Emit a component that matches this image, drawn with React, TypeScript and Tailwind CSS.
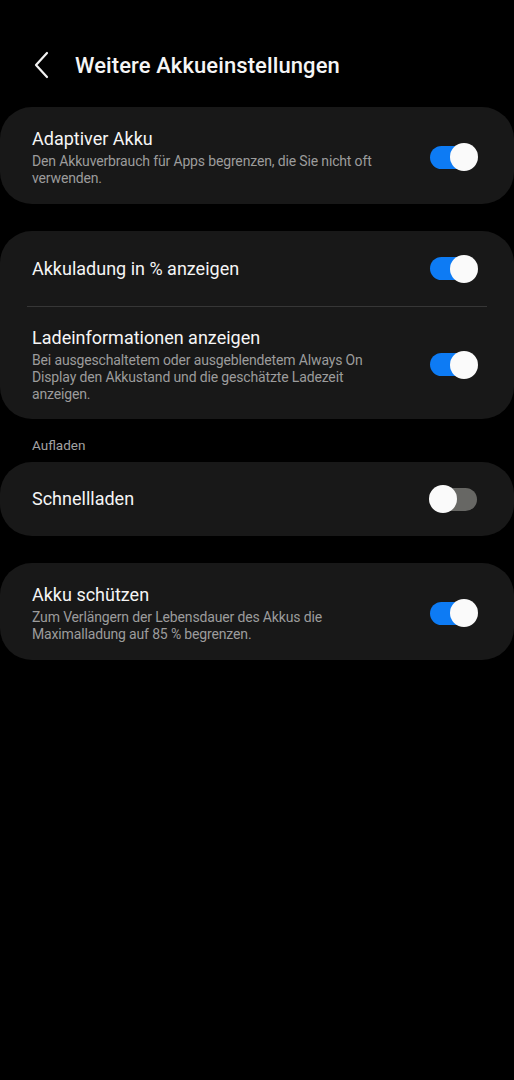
import React from 'react';

// Einstellungen-Seite: Weitere Akkueinstellungen (dunkles One UI-Layout)

function Toggle({ on }: { on: boolean }) {
  return (
    <div className="relative w-[48px] h-[28px] shrink-0 flex items-center">
      <div className={`w-[47px] h-[23px] rounded-full ${on ? 'bg-[#0d7bf4]' : 'bg-[#676764]'}`} />
      <div
        className={`absolute top-0 w-[28px] h-[28px] rounded-full bg-[#fafafa] ${on ? 'right-0' : 'left-[-1px]'}`}
      />
    </div>
  );
}

function Row({ title, sub, on }: { title: string; sub?: string; on: boolean }) {
  return (
    <div className="flex items-center justify-between pl-[32px] pr-[36px]">
      <div className="flex flex-col max-w-[360px]">
        <span className="text-[18px] leading-[24px] text-[#f5f5f5]">{title}</span>
        {sub && (
          <span className="text-[14px] leading-[17px] tracking-[-0.15px] text-[#9c9c9c] mt-[2px]">{sub}</span>
        )}
      </div>
      <Toggle on={on} />
    </div>
  );
}

export default function App() {
  return (
    <div className="min-h-screen w-full bg-black font-['Roboto',sans-serif]">
      {/* Kopfzeile */}
      <div className="h-[107px] flex items-center pt-[23px] pl-[33px]">
        <svg width="18" height="28" viewBox="0 0 18 28" fill="none" className="shrink-0">
          <path d="M14 2 L3 14 L14 26" stroke="#f2f2f2" strokeWidth="2.2" strokeLinecap="round" strokeLinejoin="round" />
        </svg>
        <span className="ml-[24px] text-[22px] font-medium text-[#f5f5f5] tracking-[0.1px]">
          Weitere Akkueinstellungen
        </span>
      </div>

      {/* Adaptiver Akku */}
      <div className="bg-[#181818] rounded-[32px] pt-[20px] pb-[17px]">
        <Row
          title="Adaptiver Akku"
          sub="Den Akkuverbrauch für Apps begrenzen, die Sie nicht oft verwenden."
          on
        />
      </div>

      {/* Anzeige */}
      <div className="mt-[27px] bg-[#181818] rounded-[32px]">
        <div className="h-[75px] flex flex-col justify-center">
          <Row title="Akkuladung in % anzeigen" on />
        </div>
        <div className="mx-[27px] h-px bg-[#363636]" />
        <div className="pt-[19px] pb-[16px]">
          <Row
            title="Ladeinformationen anzeigen"
            sub="Bei ausgeschaltetem oder ausgeblendetem Always On Display den Akkustand und die geschätzte Ladezeit anzeigen."
            on
          />
        </div>
      </div>

      {/* Aufladen */}
      <div className="pl-[32px] pt-[18px] pb-[8px] text-[13.5px] leading-[17px] text-[#a3a3a3]">Aufladen</div>
      <div className="bg-[#181818] rounded-[32px] h-[74px] flex flex-col justify-center">
        <Row title="Schnellladen" on={false} />
      </div>

      <div className="mt-[27px] bg-[#181818] rounded-[32px] pt-[20px] pb-[17px]">
        <Row
          title="Akku schützen"
          sub="Zum Verlängern der Lebensdauer des Akkus die Maximalladung auf 85 % begrenzen."
          on
        />
      </div>
    </div>
  );
}
